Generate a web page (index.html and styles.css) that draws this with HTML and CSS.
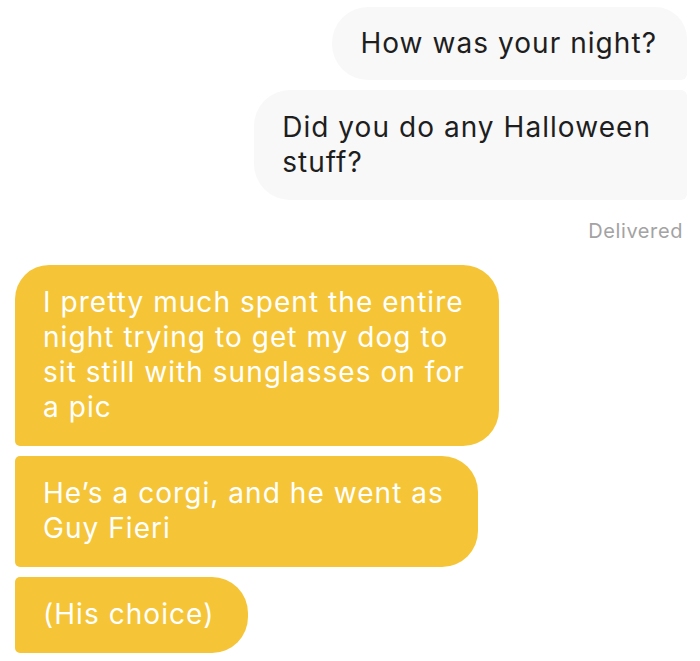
FILE: index.html
```html
<!DOCTYPE html>
<html lang="en">
<head>
<meta charset="utf-8">
<title>Chat</title>
<link rel="stylesheet" href="styles.css">
</head>
<body>
<div class="chat">
  <div class="group out">
    <div class="bubble out first">How was your night?</div>
    <div class="bubble out next">Did you do any Halloween<br>stuff?</div>
    <div class="status">Delivered</div>
  </div>
  <div class="group in">
    <div class="bubble in first">I pretty much spent the entire<br>night trying to get my dog to<br>sit still with sunglasses on for<br>a pic</div>
    <div class="bubble in next">He’s a corgi, and he went as<br>Guy Fieri</div>
    <div class="bubble in next">(His choice)</div>
  </div>
</div>
</body>
</html>
```

FILE: styles.css
```css
html, body {
  margin: 0;
  padding: 0;
  background: #ffffff;
}
.chat {
  width: 700px;
  height: 661px;
  overflow: hidden;
  box-sizing: border-box;
  padding: 7px 13px 0 15px;
  font-family: Inter, "Liberation Sans", sans-serif;
  display: flex;
  flex-direction: column;
}
.group {
  display: flex;
  flex-direction: column;
  gap: 10px;
}
.group.out {
  align-items: flex-end;
}
.group.in {
  align-items: flex-start;
  margin-top: 22px;
}
.bubble {
  font-size: 28px;
  line-height: 35px;
  white-space: nowrap;
  padding: 19px 32px 19px 28px;
  letter-spacing: 1.05px;
}
.bubble.out {
  background: #f8f8f8;
  color: #1e1e1e;
}
.bubble.in {
  background: #f5c537;
  color: #ffffff;
  padding-top: 20px;
  padding-bottom: 21px;
  padding-right: 34px;
}
.bubble.out.first {
  border-radius: 36px 32px 6px 36px;
  padding-right: 30px;
}
.bubble.out.next {
  border-radius: 36px 6px 6px 36px;
  padding-top: 20px;
  padding-bottom: 20px;
  padding-right: 36px;
}
.bubble.in.first {
  border-radius: 34px 36px 36px 5px;
}
.bubble.in.next {
  border-radius: 5px 36px 36px 5px;
}
.status {
  font-size: 20px;
  line-height: 24px;
  color: #a3a3a3;
  letter-spacing: 0.6px;
  margin-top: 9px;
  margin-right: 4px;
}
```
